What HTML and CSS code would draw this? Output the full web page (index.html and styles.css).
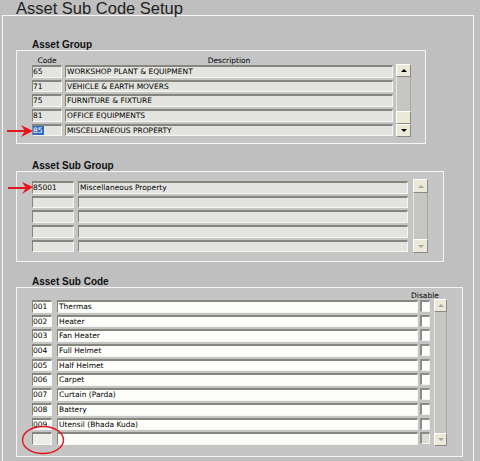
FILE: index.html
```html
<!DOCTYPE html>
<html>
<head>
<meta charset="utf-8">
<title>Asset Sub Code Setup</title>
<link rel="stylesheet" href="styles.css">
</head>
<body>
<div class="title">Asset Sub Code Setup</div>
<div class="panel">
  <section class="group">
    <div class="glabel">Asset Group</div>
    <div class="frame f1">
      <div class="hdr">
        <div class="col-code">Code</div>
        <div class="col-desc">Description</div>
      </div>
      <div class="body">
        <div class="rows">
          <div class="row"><div class="fld col-code">65</div><div class="fld col-desc">WORKSHOP PLANT &amp; EQUIPMENT</div></div>
          <div class="row"><div class="fld col-code">71</div><div class="fld col-desc">VEHICLE &amp; EARTH MOVERS</div></div>
          <div class="row"><div class="fld col-code">75</div><div class="fld col-desc">FURNITURE &amp; FIXTURE</div></div>
          <div class="row"><div class="fld col-code">81</div><div class="fld col-desc">OFFICE EQUIPMENTS</div></div>
          <div class="row"><div class="fld col-code"><span class="sel">85</span></div><div class="fld col-desc">MISCELLANEOUS PROPERTY</div></div>
        </div>
        <div class="sb">
          <div class="sbtn"><span class="up"></span></div>
          <div class="track"></div>
          <div class="sbtn thumb"></div>
          <div class="sbtn"><span class="down"></span></div>
        </div>
      </div>
    </div>
  </section>

  <section class="group g2">
    <div class="glabel">Asset Sub Group</div>
    <div class="frame f2">
      <div class="body">
        <div class="rows">
          <div class="row"><div class="fld col-code">85001</div><div class="fld col-desc">Miscellaneous Property</div></div>
          <div class="row"><div class="fld col-code"></div><div class="fld col-desc"></div></div>
          <div class="row"><div class="fld col-code"></div><div class="fld col-desc"></div></div>
          <div class="row"><div class="fld col-code"></div><div class="fld col-desc"></div></div>
          <div class="row"><div class="fld col-code"></div><div class="fld col-desc"></div></div>
        </div>
        <div class="sb dis">
          <div class="sbtn"><span class="up"></span></div>
          <div class="track"></div>
          <div class="sbtn"><span class="down"></span></div>
        </div>
      </div>
    </div>
  </section>

  <section class="group g3">
    <div class="glabel">Asset Sub Code</div>
    <div class="frame f3">
      <div class="hdr">
        <div class="spacer"></div>
        <div class="col-cb">Disable</div>
      </div>
      <div class="body">
        <div class="rows">
          <div class="row"><div class="fld col-code">001</div><div class="fld col-desc">Thermas</div><div class="cb"></div></div>
          <div class="row"><div class="fld col-code">002</div><div class="fld col-desc">Heater</div><div class="cb"></div></div>
          <div class="row"><div class="fld col-code">003</div><div class="fld col-desc">Fan Heater</div><div class="cb"></div></div>
          <div class="row"><div class="fld col-code">004</div><div class="fld col-desc">Full Helmet</div><div class="cb"></div></div>
          <div class="row"><div class="fld col-code">005</div><div class="fld col-desc">Half Helmet</div><div class="cb"></div></div>
          <div class="row"><div class="fld col-code">006</div><div class="fld col-desc">Carpet</div><div class="cb"></div></div>
          <div class="row"><div class="fld col-code">007</div><div class="fld col-desc">Curtain (Parda)</div><div class="cb"></div></div>
          <div class="row"><div class="fld col-code">008</div><div class="fld col-desc">Battery</div><div class="cb"></div></div>
          <div class="row"><div class="fld col-code">009</div><div class="fld col-desc">Utensil (Bhada Kuda)</div><div class="cb"></div></div>
          <div class="row"><div class="fld col-code empty"></div><div class="fld col-desc"></div><div class="cb off"></div></div>
        </div>
        <div class="sb dis">
          <div class="sbtn"><span class="up"></span></div>
          <div class="track"></div>
          <div class="sbtn"><span class="down"></span></div>
        </div>
      </div>
    </div>
  </section>
</div>

<svg class="marks" width="480" height="461" viewBox="0 0 480 461">
  <line x1="7" y1="131" x2="27" y2="131" stroke="#e3161b" stroke-width="2"/>
  <polygon points="21,125 33,131 21,137 25,131" fill="#e3161b"/>
  <line x1="8" y1="188" x2="28" y2="188" stroke="#e3161b" stroke-width="2"/>
  <polygon points="22,182 33,187 22,194 26,188" fill="#e3161b"/>
  <ellipse cx="43" cy="440" rx="20.5" ry="13.5" stroke="#e3161b" stroke-width="1.4" fill="none"/>
</svg>
</body>
</html>
```

FILE: styles.css
```css
html, body {
  margin: 0;
  padding: 0;
}

body {
  width: 480px;
  height: 461px;
  overflow: hidden;
  position: relative;
  background: #bfbfbf;
  font-family: "DejaVu Sans", "Liberation Sans", sans-serif;
  font-size: 7.5px;
  color: #000;
}

.title {
  height: 15px;
  padding-left: 16px;
  font-family: "Liberation Sans", Arial, sans-serif;
  font-size: 16.5px;
  line-height: 16.5px;
  color: #1e1e1e;
  white-space: nowrap;
}

.panel {
  margin-left: 2px;
  width: 472px;
  height: 446px;
  box-sizing: border-box;
  border: 1px solid #f6f6f6;
  border-bottom: none;
  padding-top: 24px;
}

.glabel {
  margin-left: 29px;
  height: 10px;
  font-family: "Liberation Sans", Arial, sans-serif;
  font-weight: bold;
  font-size: 10px;
  line-height: 10px;
  color: #111;
  white-space: nowrap;
}

.g2 { margin-top: 17px; }
.g3 { margin-top: 15px; }

.frame {
  margin-left: 13px;
  box-sizing: border-box;
  border: 1px solid #f4f4f4;
  background: #c5c5c5;
  padding-left: 15px;
}

.f1 { width: 410px; height: 94px; padding-top: 5px; }
.f2 { width: 428px; height: 91px; padding-top: 9px; }
.f3 { width: 447px; height: 170px; padding-top: 3px; }

.hdr {
  display: flex;
  height: 9px;
  line-height: 9px;
  white-space: nowrap;
}
.hdr > div {
  display: flex;
  justify-content: center;
}

.body {
  display: flex;
}

.rows {
  display: flex;
  flex-direction: column;
  gap: 2px;
}

.row {
  display: flex;
}

.fld {
  height: 12.7px;
  box-sizing: border-box;
  border-top: 2px solid #86867e;
  border-left: 1px solid #86867e;
  border-right: 1px solid #f6f6f2;
  border-bottom: 1px solid #f6f6f2;
  background: #e3e3df;
  line-height: 9.7px;
  white-space: nowrap;
  overflow: hidden;
}
.fld.col-desc { padding-left: 1px; }

/* frame 1 columns */
.f1 .hdr, .f1 .row { gap: 3px; }
.f1 .body { gap: 3px; }
.f1 .col-code { width: 30px; }
.f1 .col-desc { width: 328px; }

/* frame 2 columns */
.f2 .row { gap: 4px; }
.f2 .body { gap: 5px; }
.f2 .col-code { width: 42px; }
.f2 .col-desc { width: 330px; }

/* frame 3 columns */
.f3 .row { gap: 5px; }
.f3 .row .cb { margin-left: -3px; }
.f3 .body { gap: 4px; }
.f3 .col-code { width: 20px; }
.f3 .col-desc { width: 361px; }
.f3 .fld { background: #fdfdfa; }
.f3 .fld.empty { background: #ecece8; }
.f3 .spacer { width: 388px; }
.f3 .col-cb { width: 10px; }

.sel {
  display: inline-block;
  background: #316ac5;
  color: #fff;
  line-height: 10px;
  padding: 0 1px 0 0;
  margin-top: -1px;
}

.cb {
  width: 10px;
  height: 12px;
  box-sizing: border-box;
  border-top: 2px solid #8c8c84;
  border-left: 2px solid #8c8c84;
  border-right: 1px solid #f2f2ee;
  border-bottom: 1px solid #f2f2ee;
  background: #fff;
}
.cb.off { background: #dcdcd6; }

/* scrollbars */
.sb {
  display: flex;
  flex-direction: column;
  width: 15px;
  align-self: flex-start;
}
.f1 .sb { height: 73px; margin-top: -1px; }
.f2 .sb { height: 74px; margin-top: -2px; }
.f3 .sb { width: 13px; height: 147px; margin-top: -1px; }

.sbtn {
  height: 13px;
  flex: none;
  box-sizing: border-box;
  background: #ece9d8;
  border: 1px solid;
  border-color: #ffffff #8a8a82 #8a8a82 #ffffff;
  display: flex;
  align-items: center;
  justify-content: center;
}
.f2 .sbtn { height: 14px; }

.track {
  flex: 1;
  box-sizing: border-box;
  background: #c6c6c2;
  border-left: 1px solid #e6e6e2;
  border-right: 1px solid #a6a6a2;
}

.up, .down {
  width: 0;
  height: 0;
  border-left: 3px solid transparent;
  border-right: 3px solid transparent;
}
.up { border-bottom: 3px solid #000; }
.down { border-top: 3px solid #000; }
.dis .up { border-bottom-color: #a8a8a0; }
.dis .down { border-top-color: #a8a8a0; }

.marks {
  position: absolute;
  left: 0;
  top: 0;
  pointer-events: none;
}
```
